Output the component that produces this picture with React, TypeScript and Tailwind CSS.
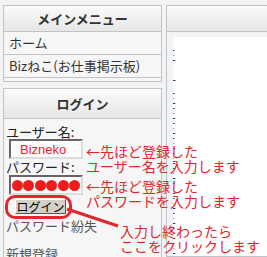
import React from "react";

const jp = "font-['Noto_Sans_CJK_JP','Noto_Sans',sans-serif]";

const navItems = ["ホーム", "Bizねこ(お仕事掲示板)"];

function BoxHeader({ title }: { title: string }) {
  return (
    <div className="flex h-full items-center justify-center border-b border-[#bcc5cc] bg-gradient-to-b from-[#fbfbfb] to-[#e6e6e6] text-[13px] font-bold text-[#333]">
      {title}
    </div>
  );
}

function Callout({ lines, className }: { lines: string[]; className: string }) {
  return (
    <div className={`absolute text-[14px] leading-[15px] text-[#e3262d] ${className}`}>
      {lines.map((l, i) => (
        <div key={i} className="whitespace-nowrap">
          {l}
        </div>
      ))}
    </div>
  );
}

export default function App() {
  return (
    <div className={`relative flex h-[257px] w-[267px] gap-[4px] overflow-hidden bg-[#f3f3f3] pl-[3px] pt-[5px] ${jp}`}>
      {/* left column */}
      <div className="flex w-[159px] shrink-0 flex-col gap-[6px]">
        <div className="flex flex-col border border-[#bcc5cc] bg-[#f6f6f6]">
          <div className="h-[26px]">
            <BoxHeader title="メインメニュー" />
          </div>
          {navItems.map((item) => (
            <div
              key={item}
              className="flex h-[23px] items-center border-b border-[#c4c4c4] pl-[5px] text-[13px] text-[#333]"
            >
              {item}
            </div>
          ))}
          <div className="h-[3px]" />
        </div>

        <div className="flex flex-1 flex-col border border-b-0 border-[#bcc5cc] bg-[#f6f6f6]">
          <div className="h-[30px]">
            <BoxHeader title="ログイン" />
          </div>
          <div className="flex flex-col pl-[2px] pt-[5px] text-[13px] leading-[15px] text-[#222]">
            <div>ユーザー名:</div>
            <div className="ml-[3px] flex h-[20px] w-[74px] items-center border-2 border-[#666] border-b-[#ddd] border-r-[#ddd] bg-[#fcfcfc] pl-[9px] font-['Liberation_Sans',sans-serif] text-[13px] text-[#e3262d]">
              Bizneko
            </div>
            <div>パスワード:</div>
            <div className="ml-[3px] mt-[1px] flex h-[20px] w-[74px] items-center gap-[0.4px] border-2 border-[#666] border-b-[#ddd] border-r-[#ddd] bg-[#fcfcfc] pl-[1px]">
              {[0, 1, 2, 3, 4, 5].map((i) => (
                <span key={i} className="h-[11px] w-[11px] shrink-0 rounded-full bg-[#f01c1c]" />
              ))}
            </div>
            <div className="ml-[9px] mt-[4px] flex h-[15px] w-[51px] items-center justify-center border border-[#fff] border-b-[#555] border-r-[#555] bg-[#d4d0c8] text-[12px] text-black">
              ログイン
            </div>
            <div className="mt-[4px] text-[#555]">パスワード紛失</div>
            <div className="mt-[13px] text-[#555]">新規登録</div>
          </div>
        </div>
      </div>

      {/* right column */}
      <div className="flex flex-1 flex-col border border-r-0 border-[#bcc5cc] bg-[#f3f3f3]">
        <div className="h-[26px] shrink-0 border-b border-[#bcc5cc] bg-gradient-to-b from-[#fbfbfb] to-[#e6e6e6]" />
        <div className="flex flex-1 pl-[6px] pt-[5px]">
          <div className="flex flex-1 bg-white">
            <div className="w-[3px] overflow-hidden pt-[10px] text-[13px] leading-[15px] text-[#1b3c6e]">
              <div className="-ml-[10px] flex flex-col gap-[11px]">
                <span>三</span>
                <span>十</span>
              </div>
              <div className="-ml-[10px] mt-[2px] flex flex-col">
                {Array.from({ length: 11 }).map((_, i) => (
                  <span key={i}>三</span>
                ))}
              </div>
            </div>
          </div>
        </div>
      </div>

      {/* annotations */}
      <Callout className="left-[86px] top-[144px]" lines={["←先ほど登録した", "ユーザー名を入力します"]} />
      <Callout className="left-[86px] top-[179px]" lines={["←先ほど登録した", "パスワードを入力します"]} />
      <Callout className="left-[120px] top-[224px]" lines={["入力し終わったら", " ここをクリックします"]} />
      <div className="absolute left-[5px] top-[195px] h-[24px] w-[67px] rounded-[10px] border-[3px] border-[#e3262d]" />
      <svg className="absolute left-0 top-0" width="267" height="257">
        <line x1="67" y1="209" x2="118" y2="226" stroke="#e3262d" strokeWidth="3" />
      </svg>
    </div>
  );
}
